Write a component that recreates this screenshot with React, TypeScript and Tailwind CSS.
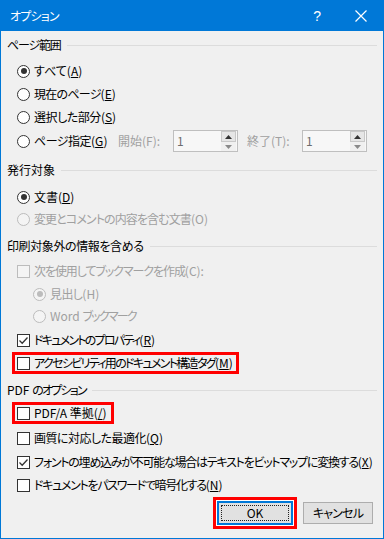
import type { ReactNode } from 'react';

const font = { fontFamily: '"Noto Sans CJK JP", "Noto Sans", sans-serif', fontFeatureSettings: '"palt"' };

function Heading({ children, className = '', tr = '' }: { children: ReactNode; className?: string; tr?: string }) {
  return (
    <div className={`flex items-center h-[20px] ${className}`}>
      <span className={`whitespace-nowrap ${tr}`}>{children}</span>
      <div className="flex-1 h-px bg-[#dcdcdc] ml-[6px]" />
    </div>
  );
}

function Radio({ checked = false, disabled = false }: { checked?: boolean; disabled?: boolean }) {
  return (
    <span
      className={`w-[13px] h-[13px] rounded-full border flex items-center justify-center shrink-0 ${
        disabled ? 'border-[#bcbcbc] bg-[#f4f4f4]' : 'border-[#333333] bg-white'
      }`}
    >
      {checked && <span className={`w-[6px] h-[6px] rounded-full ${disabled ? 'bg-[#bcbcbc]' : 'bg-[#333333]'}`} />}
    </span>
  );
}

function Check({ checked = false, disabled = false }: { checked?: boolean; disabled?: boolean }) {
  return (
    <span
      className={`w-[13px] h-[13px] border flex items-center justify-center shrink-0 ${
        disabled ? 'border-[#bcbcbc] bg-[#f4f4f4]' : 'border-[#333333] bg-white'
      }`}
    >
      {checked && (
        <svg width="11" height="11" viewBox="0 0 11 11">
          <path d="M1.5 5.5 L4.2 8.2 L9.5 2.5" fill="none" stroke="#333333" strokeWidth="1.3" />
        </svg>
      )}
    </span>
  );
}

// label gets the tracking, the "(X)" access-key suffix keeps normal spacing
function Row({
  control,
  label,
  suffix,
  disabled = false,
  className = '',
  tr = '',
  h = 'h-[22px]',
}: {
  control: ReactNode;
  label: ReactNode;
  suffix?: ReactNode;
  disabled?: boolean;
  className?: string;
  tr?: string;
  h?: string;
}) {
  return (
    <div className={`flex items-center gap-[4px] ${h} ${disabled ? 'text-[#a0a0a0]' : 'text-black'} ${className}`}>
      {control}
      <span className="whitespace-nowrap">
        <span className={tr}>{label}</span>
        {suffix}
      </span>
    </div>
  );
}

function Spin({ label }: { label: string }) {
  return (
    <div className="flex items-center text-[#a0a0a0]">
      <span className="w-[55px] whitespace-nowrap">{label}</span>
      <div className="w-[65px] h-[22px] border border-[#bfbfbf] bg-[#f7f7f7] flex items-center">
        <span className="flex-1 pl-[3px] text-[#6d6d6d]">1</span>
        <div className="w-[15px] h-[20px] flex flex-col mr-[1px]">
          <div className="flex-1 bg-[#e6e6e6] border border-[#c8c8c8] flex items-center justify-center">
            <svg width="7" height="4" viewBox="0 0 7 4"><path d="M0 4 L3.5 0 L7 4 Z" fill="#333" /></svg>
          </div>
          <div className="flex-1 bg-[#f0f0f0] flex items-center justify-center">
            <svg width="7" height="4" viewBox="0 0 7 4"><path d="M0 0 L3.5 4 L7 0 Z" fill="#8a8a8a" /></svg>
          </div>
        </div>
      </div>
    </div>
  );
}

const Key = ({ k }: { k: string }) => <>(<u>{k}</u>)</>;

export default function App() {
  return (
    <div className="w-[384px] h-[539px] border border-[#0078d7] bg-[#f0f0f0] flex flex-col text-[12px] leading-none" style={font}>
      {/* Title bar */}
      <div className="h-[30px] bg-[#0078d7] flex items-center text-white shrink-0">
        <span className="ml-[9px] tracking-[-0.8px]">オプション</span>
        <span className="ml-auto text-[14px] mr-[34px]" style={{ fontFamily: '"Liberation Sans", sans-serif' }}>?</span>
        <svg width="12" height="12" viewBox="0 0 12 12" className="mr-[16px]">
          <path d="M0.5 0.5 L11.5 11.5 M11.5 0.5 L0.5 11.5" stroke="white" strokeWidth="1.2" />
        </svg>
      </div>

      <div className="flex flex-col px-[6px]">
        <Heading className="mt-[4px]" tr="tracking-[-1.2px]">ページ範囲</Heading>
        <Row className="ml-[10px] mt-[5px]" control={<Radio checked />} label="すべて" suffix={<Key k="A" />} />
        <Row className="ml-[10px] mt-[1px]" tr="tracking-[-0.75px]" control={<Radio />} label="現在のページ" suffix={<Key k="E" />} />
        <Row className="ml-[10px] mt-[1px]" tr="tracking-[-0.45px]" control={<Radio />} label="選択した部分" suffix={<Key k="S" />} />
        <div className="flex items-center mt-[2px] ml-[10px] h-[22px]">
          <Row className="w-[101px]" tr="tracking-[-0.5px]" control={<Radio />} label="ページ指定" suffix={<Key k="G" />} />
          <Spin label="開始(F):" />
          <div className="ml-[9px]"><Spin label="終了(T):" /></div>
        </div>

        <Heading className="mt-[8px]">発行対象</Heading>
        <Row className="ml-[10px] mt-[6px]" control={<Radio checked />} label="文書" suffix={<Key k="D" />} />
        <Row className="ml-[10px]" tr="tracking-[-0.9px]" disabled control={<Radio disabled />} label="変更とコメントの内容を含む文書" suffix="(O)" />

        <Heading className="mt-[6px]" tr="tracking-[-0.4px]">印刷対象外の情報を含める</Heading>
        <Row className="ml-[10px] mt-[4px]" tr="tracking-[-1.08px]" disabled control={<Check disabled />} label="次を使用してブックマークを作成" suffix="(C):" />
        <Row className="ml-[26px] mt-[1px]" tr="tracking-[-0.6px]" disabled control={<Radio checked disabled />} label="見出し" suffix="(H)" />
        <Row
          className="ml-[26px]"
          disabled
          control={<Radio disabled />}
          label={<>Word <span className="tracking-[-1.8px]">ブックマーク</span></>}
        />
        <Row className="ml-[10px] mt-[2px]" tr="tracking-[-1.75px]" control={<Check checked />} label="ドキュメントのプロパティ" suffix={<Key k="R" />} />
        <div className="self-start ml-[5px] mt-[1px] border-[3px] border-[#ff0000] pl-[2px] pr-[3px]">
          <Row h="h-[16px]" tr="tracking-[-1.67px]" control={<Check />} label="アクセシビリティ用のドキュメント構造タグ" suffix={<Key k="M" />} />
        </div>

        <Heading className="mt-[6px]">
          PDF <span className="tracking-[-1.8px]">のオプション</span>
        </Heading>
        <div className="self-start ml-[5px] mt-[2px] border-[3px] border-[#ff0000] pl-[2px] pr-[4px]">
          <Row h="h-[16px]" control={<Check />} label="PDF/A 準拠" suffix={<Key k="/" />} />
        </div>
        <Row className="ml-[10px] mt-[3px]" tr="tracking-[-0.52px]" control={<Check />} label="画質に対応した最適化" suffix={<Key k="Q" />} />
        <Row className="ml-[10px] mt-[2px]" tr="tracking-[-1.25px]" control={<Check checked />} label="フォントの埋め込みが不可能な場合はテキストをビットマップに変換する" suffix={<Key k="X" />} />
        <Row className="ml-[10px] mt-[1px]" tr="tracking-[-1.3px]" control={<Check />} label="ドキュメントをパスワードで暗号化する" suffix={<Key k="N" />} />

        <div className="flex items-center justify-end mt-[1px] pr-[4px] gap-[6px]">
          <div className="w-[84px] h-[32px] border-[3px] border-[#ff0000] bg-white p-px">
            <div className="w-full h-full border-2 border-[#0078d7] bg-[#e1e1e1] p-[2px]">
              <div className="w-full h-full border border-dotted border-[#222] flex items-center justify-center">OK</div>
            </div>
          </div>
          <div className="w-[70px] h-[22px] border border-[#adadad] bg-[#e1e1e1] flex items-center justify-center tracking-[-0.8px]">キャンセル</div>
        </div>
      </div>
    </div>
  );
}
